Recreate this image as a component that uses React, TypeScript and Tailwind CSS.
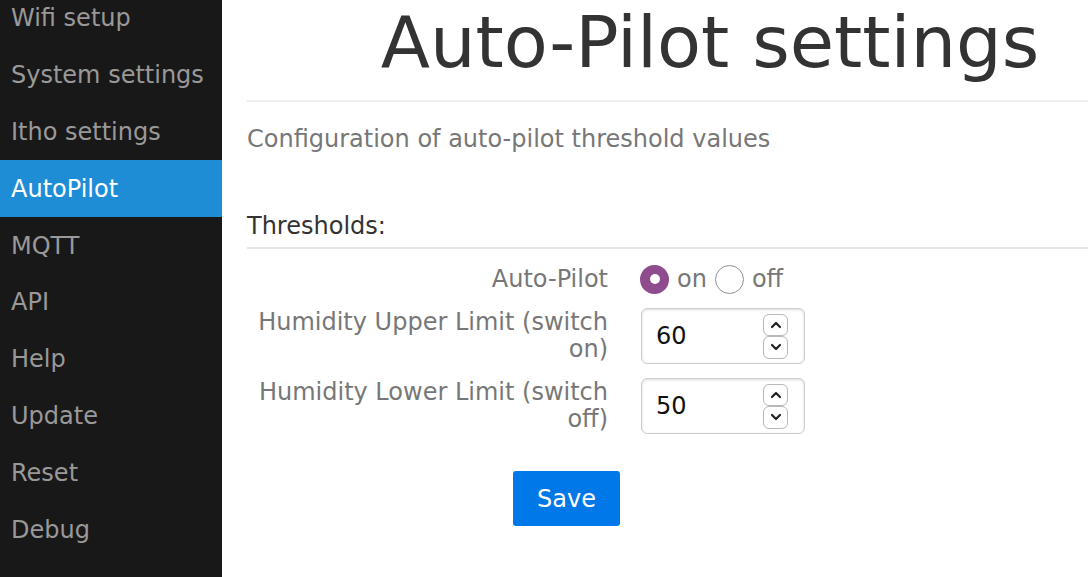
import React from "react";

const menu = [
  "Wifi setup",
  "System settings",
  "Itho settings",
  "AutoPilot",
  "MQTT",
  "API",
  "Help",
  "Update",
  "Reset",
  "Debug",
];

function Spinner() {
  return (
    <div className="flex flex-col">
      <div className="w-[25px] h-[22px] rounded-[6px] border border-[#b8b8b8] flex items-center justify-center bg-white">
        <svg width="12" height="8" viewBox="0 0 12 8">
          <polyline points="2,6 6,2 10,6" fill="none" stroke="#222" strokeWidth="2.2" strokeLinecap="round" strokeLinejoin="round" />
        </svg>
      </div>
      <div className="w-[25px] h-[23px] rounded-[6px] border border-[#b8b8b8] flex items-center justify-center bg-white">
        <svg width="12" height="8" viewBox="0 0 12 8">
          <polyline points="2,2 6,6 10,2" fill="none" stroke="#222" strokeWidth="2.2" strokeLinecap="round" strokeLinejoin="round" />
        </svg>
      </div>
    </div>
  );
}

function NumberField({ value }: { value: string }) {
  return (
    <div className="w-[164px] h-[56px] rounded-[6px] border-[1.5px] border-[#cccccc] shadow-[inset_0_1px_3px_#dddddd] flex items-center pl-[14px] pr-[16px] justify-between bg-white">
      <span className="text-[24px] text-[#111]">{value}</span>
      <Spinner />
    </div>
  );
}

export default function App() {
  return (
    <div
      className="flex w-[1088px] h-[577px] overflow-hidden bg-white"
      style={{ fontFamily: '"DejaVu Sans", "Liberation Sans", sans-serif' }}
    >
      <nav className="w-[222px] shrink-0 bg-[#191818] overflow-hidden">
        <ul className="-mt-[10px]">
          {menu.map((m) => (
            <li
              key={m}
              className={
                m === "AutoPilot"
                  ? "h-[56.8px] flex items-center pl-[11px] text-[24px] bg-[#1f8dd6] text-white"
                  : "h-[56.8px] flex items-center pl-[11px] text-[24px] text-[#999999]"
              }
            >
              {m}
            </li>
          ))}
        </ul>
      </nav>
      <main className="flex-1 overflow-hidden pl-[25px]">
        <div className="w-[926px]">
          <div className="pt-[6px] pb-[22px] border-b-2 border-[#eeeeee]">
            <h1 className="text-[72px] leading-[72px] text-center text-[#333333] font-normal">
              Auto-Pilot settings
            </h1>
          </div>
          <p className="mt-[23px] text-[24px] leading-[28px] text-[#777777]">
            Configuration of auto-pilot threshold values
          </p>
          <div className="mt-[59px] pb-[7px] border-b-2 border-[#e5e5e5] text-[24px] leading-[28px] text-[#333333]">
            Thresholds:
          </div>
          <div className="mt-[15px] flex flex-col gap-[14px]">
            <div className="flex items-center h-[30px]">
              <label className="w-[361px] text-right text-[24px] leading-[27px] text-[#777777]">
                Auto-Pilot
              </label>
              <div className="ml-[32px] flex items-center">
                <span className="w-[29px] h-[29px] rounded-full bg-[#8e4b8e] flex items-center justify-center">
                  <span className="w-[10px] h-[10px] rounded-full bg-white" />
                </span>
                <span className="ml-[8px] text-[24px] text-[#777777]">on</span>
                <span className="ml-[8px] w-[29px] h-[29px] rounded-full border-[1.5px] border-[#8f8f8f] bg-white" />
                <span className="ml-[8px] text-[24px] text-[#777777]">off</span>
              </div>
            </div>
            <div className="flex items-center h-[56px]">
              <label className="w-[361px] text-right text-[24px] leading-[27px] text-[#777777]">
                Humidity Upper Limit (switch on)
              </label>
              <div className="ml-[33px]">
                <NumberField value="60" />
              </div>
            </div>
            <div className="flex items-center h-[56px]">
              <label className="w-[361px] text-right text-[24px] leading-[27px] text-[#777777]">
                Humidity Lower Limit (switch off)
              </label>
              <div className="ml-[33px]">
                <NumberField value="50" />
              </div>
            </div>
          </div>
          <div className="mt-[37px] pl-[266px]">
            <button className="w-[107px] h-[55px] rounded-[3px] bg-[#0078e7] text-white text-[24px]">
              Save
            </button>
          </div>
        </div>
      </main>
    </div>
  );
}
